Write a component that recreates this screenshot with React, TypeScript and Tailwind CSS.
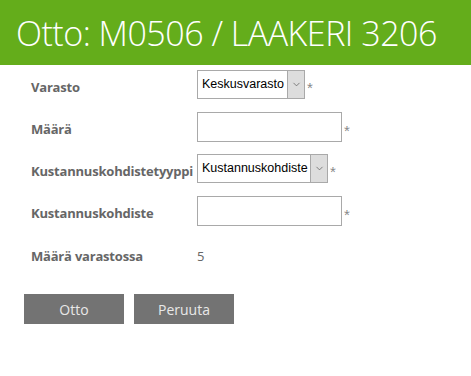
import { ChevronDown } from "lucide-react";

function Select({ value, width }: { value: string; width: string }) {
  return (
    <div className={`flex h-[29px] items-stretch border border-[#a9a9a9] bg-white ${width}`}>
      <span className="flex flex-1 items-center overflow-hidden whitespace-nowrap pl-[4px] font-['Liberation_Sans',sans-serif] text-[12.5px] text-black">
        {value}
      </span>
      <span className="flex w-[17px] items-center justify-center border-l border-[#a9a9a9] bg-[#dddddd]">
        <ChevronDown size={11} strokeWidth={1.5} className="text-[#555]" />
      </span>
    </div>
  );
}

function Star() {
  return (
    <span className="ml-[2px] mt-[8px] font-['Liberation_Sans',sans-serif] text-[15px] text-[#888]">*</span>
  );
}

export default function App() {
  const labelCls =
    "w-[166px] shrink-0 whitespace-nowrap text-[13px] font-bold tracking-[-0.2px] text-[#666] font-['Open_Sans',sans-serif]";

  return (
    <div className="h-[376px] w-[471px] bg-white font-['Open_Sans',sans-serif]">
      {/* HEADER */}
      <div className="flex h-[65px] items-center bg-[#64ad1b] pl-[16px]">
        <h1 className="whitespace-nowrap text-[34px] font-light leading-none tracking-[-0.5px] text-white">
          Otto: M0506 / LAAKERI 3206
        </h1>
      </div>

      {/* FORM */}
      <div className="flex flex-col pl-[31px] pt-[5px]">
        <div className="flex h-[29px] items-center">
          <span className={labelCls + " pt-[6px]"}>Varasto</span>
          <Select value="Keskusvarasto" width="w-[108px]" />
          <Star />
        </div>
        <div className="mt-[13px] flex h-[30px] items-center">
          <span className={labelCls + " pt-[6px]"}>Määrä</span>
          <div className="h-[30px] w-[145px] border border-[#a9a9a9] bg-white" />
          <Star />
        </div>
        <div className="mt-[12px] flex h-[29px] items-center">
          <span className={labelCls + " pt-[6px]"}>Kustannuskohdistetyyppi</span>
          <Select value="Kustannuskohdiste" width="w-[131px]" />
          <Star />
        </div>
        <div className="mt-[13px] flex h-[30px] items-center">
          <span className={labelCls + " pt-[6px]"}>Kustannuskohdiste</span>
          <div className="h-[30px] w-[145px] border border-[#a9a9a9] bg-white" />
          <Star />
        </div>
        <div className="mt-[16px] flex h-[30px] items-center">
          <span className={labelCls}>Määrä varastossa</span>
          <span className="text-[13px] text-[#666]">5</span>
        </div>

        {/* BUTTONS */}
        <div className="-ml-[7px] mt-[22px] flex gap-[10px]">
          <button className="h-[30px] w-[100px] bg-[#737373] text-[14px] text-[#e8e8e8]">Otto</button>
          <button className="h-[30px] w-[100px] bg-[#737373] text-[14px] text-[#e8e8e8]">Peruuta</button>
        </div>
      </div>
    </div>
  );
}
